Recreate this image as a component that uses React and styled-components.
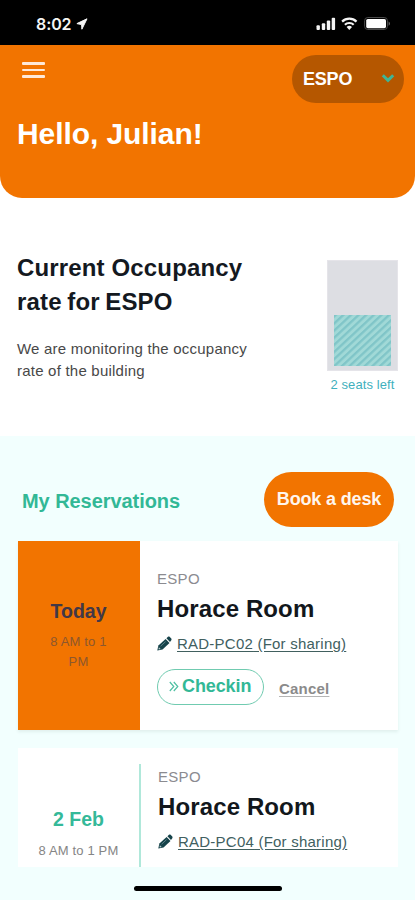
import styled, { createGlobalStyle } from 'styled-components';

const GlobalStyle = createGlobalStyle`
  * {
    box-sizing: border-box;
  }
  body {
    margin: 0;
    background: #ffffff;
    font-family: 'Liberation Sans', Arial, sans-serif;
  }
`;

const Container = styled.div`
  width: 415px;
  height: 900px;
  display: flex;
  flex-direction: column;
  overflow: hidden;
  position: relative;
  white-space: nowrap;
`;

const StatusBar = styled.div`
  height: 45px;
  flex: none;
  background: #000000;
  display: flex;
  justify-content: space-between;
  padding: 14px 25px 0 36px;
`;

const Clock = styled.div`
  display: flex;
  align-items: center;
  gap: 5px;
  height: 20px;
  color: #f4f4f4;
  font-family: Inter, sans-serif;
  font-weight: 600;
  font-size: 16px;
  letter-spacing: -0.1px;
`;

const StatusIcons = styled.div`
  display: flex;
  align-items: flex-start;
  padding-top: 2px;
`;

const Header = styled.div`
  height: 153px;
  flex: none;
  background: #f27400;
  border-radius: 0 0 22px 22px;
  padding: 10px 11px 0 17px;
`;

const HeaderTop = styled.div`
  display: flex;
  justify-content: space-between;
  align-items: flex-start;
  padding-left: 5px;
`;

const MenuButton = styled.div`
  width: 23px;
  display: flex;
  flex-direction: column;
  gap: 4px;
  padding-top: 7px;
`;

const MenuLine = styled.div`
  height: 2.5px;
  border-radius: 1px;
  background: #ffe9d8;
`;

const SiteSelect = styled.div`
  width: 112px;
  height: 48px;
  border-radius: 24px;
  background: #b55700;
  display: flex;
  align-items: center;
  justify-content: space-between;
  padding: 1px 9px 0 11px;
  color: #ffffff;
  font-size: 18px;
  font-weight: 700;
  letter-spacing: -0.2px;
`;

const Hello = styled.div`
  margin-top: 14px;
  color: #ffffff;
  font-size: 30px;
  font-weight: 700;
  line-height: 34px;
  letter-spacing: -0.08px;
`;

const Occupancy = styled.div`
  height: 238px;
  flex: none;
  display: flex;
  justify-content: space-between;
  padding: 53px 17px 0 17px;
`;

const OccupancyTitle = styled.div`
  color: #14191f;
  font-size: 24px;
  font-weight: 700;
  line-height: 34px;
  letter-spacing: 0.15px;
`;

const TitleLine = styled.div`
  word-spacing: ${({ $tight }) => ($tight ? '-1.2px' : '0')};
`;

const OccupancyText = styled.div`
  margin-top: 19px;
  color: #484848;
  font-size: 15px;
  line-height: 22px;
  letter-spacing: 0.22px;
`;

const Chart = styled.div`
  width: 71px;
  margin-top: 9px;
  display: flex;
  flex-direction: column;
  align-items: center;
`;

const ChartBar = styled.div`
  width: 71px;
  height: 111px;
  background: #dddee3;
  border: 1px solid #e5e4e9;
  display: flex;
  align-items: flex-end;
  padding: 0 6px 4px;
`;

const ChartLabel = styled.div`
  margin-top: 6px;
  color: #3fb0bd;
  font-size: 13px;
  line-height: 15px;
  letter-spacing: 0.1px;
`;

const Reservations = styled.div`
  flex: 1;
  min-height: 0;
  background: #f2fffe;
  padding: 36px 17px 0 18px;
`;

const ReservationsHead = styled.div`
  display: flex;
  justify-content: space-between;
  align-items: center;
  padding: 0 4px;
  margin-bottom: 14px;
`;

const ReservationsTitle = styled.div`
  padding-top: 4px;
  color: #32b896;
  font-size: 20px;
  font-weight: 700;
  letter-spacing: -0.06px;
`;

const BookButton = styled.div`
  width: 130px;
  height: 55px;
  border-radius: 28px;
  background: #f27400;
  color: #fff6ee;
  display: flex;
  align-items: center;
  justify-content: center;
  font-size: 18px;
  font-weight: 700;
  letter-spacing: -0.15px;
`;

const Card = styled.div`
  width: 380px;
  height: ${({ $height }) => $height}px;
  margin-bottom: 18px;
  padding-top: ${({ $active }) => ($active ? 0 : 16)}px;
  background: #ffffff;
  box-shadow: ${({ $active }) =>
    $active ? '0 2px 3px rgba(60, 90, 80, 0.09)' : 'none'};
  display: flex;
`;

const DateBox = styled.div`
  width: ${({ $active }) => ($active ? 122 : 123)}px;
  flex: none;
  padding: ${({ $active }) => ($active ? '59px 32px 0 31px' : '44px 0 0')};
  background: ${({ $active }) => ($active ? '#f27400' : '#ffffff')};
  border-right: ${({ $active }) => ($active ? 'none' : '2px solid #b0e8da')};
  text-align: center;
`;

const Day = styled.div`
  color: ${({ $active }) => ($active ? '#413847' : '#35b999')};
  font-size: 19.5px;
  font-weight: 700;
  line-height: 23px;
`;

const Time = styled.div`
  margin: ${({ $active }) => ($active ? '9px 0 0 -4px' : '10px 0 0')};
  padding-left: ${({ $active }) => ($active ? 4 : 0)}px;
  color: ${({ $active }) => ($active ? '#8d572d' : '#858585')};
  font-size: 13px;
  line-height: 20px;
  letter-spacing: 0.15px;
  white-space: ${({ $active }) => ($active ? 'normal' : 'nowrap')};
`;

const Info = styled.div`
  padding: ${({ $active }) => ($active ? '29px 0 0 17px' : '4px 0 0 17px')};
`;

const Site = styled.div`
  color: #8b8b90;
  font-size: 15px;
  line-height: 18px;
  letter-spacing: 0.3px;
`;

const Room = styled.div`
  margin-top: 6px;
  color: #12171c;
  font-size: 24px;
  font-weight: 700;
  line-height: 30px;
  letter-spacing: 0.12px;
`;

const Desk = styled.div`
  display: flex;
  align-items: center;
  gap: 4px;
  margin-top: 10px;
  color: #41605f;
  font-size: 15px;
  line-height: 20px;
  letter-spacing: 0.23px;
`;

const DeskName = styled.span`
  text-decoration: underline;
  text-underline-offset: 2px;
`;

const Actions = styled.div`
  display: flex;
  align-items: center;
  gap: 15px;
  margin-top: 15px;
`;

const CheckinButton = styled.div`
  width: 107px;
  height: 36px;
  border: 1px solid #70cbb0;
  border-radius: 18px;
  display: flex;
  align-items: center;
  gap: 3px;
  padding: 0 0 1px 11px;
  color: #32b896;
  font-size: 18px;
  font-weight: 700;
  letter-spacing: -0.1px;
`;

const CancelButton = styled.div`
  padding-top: 2px;
  color: #8b8b8b;
  font-size: 15px;
  font-weight: 700;
  letter-spacing: 0.2px;
  text-decoration: underline;
  text-decoration-color: #b5b5b5;
  text-underline-offset: 2px;
`;

const Footer = styled.div`
  height: 33px;
  flex: none;
  background: #f2fffe;
  display: flex;
  justify-content: center;
  padding: 19px 0 0 1px;
`;

const HomeBar = styled.div`
  width: 148px;
  height: 5px;
  border-radius: 3px;
  background: #000000;
`;

function LocationIcon() {
  return (
    <svg width="12" height="12" viewBox="0 0 12 12">
      <path
        d="M11 .8.9 5.6l4.7 1 .3 4.6z"
        fill="#f4f4f4"
        stroke="#f4f4f4"
        strokeWidth="1"
        strokeLinejoin="round"
      />
    </svg>
  );
}

function SignalIcons() {
  return (
    <svg width="75" height="16" viewBox="0 0 75 16" fill="#f4f4f4">
      <rect x="1.5" y="9.3" width="3.4" height="4.6" rx="1" />
      <rect x="6.8" y="7.3" width="3.4" height="6.6" rx="1" />
      <rect x="11.8" y="4.6" width="3.4" height="9.3" rx="1" />
      <rect x="16.7" y="1.8" width="3.4" height="12.1" rx="1" />
      <g fill="none" stroke="#f4f4f4" strokeWidth="2.2">
        <path d="M27.1 5.6a10.2 10.2 0 0 1 14.4 0" />
        <path d="M29.9 8.8a6.3 6.3 0 0 1 8.8 0" />
      </g>
      <path d="M34.3 13.9l-2.7-2.9a4 4 0 0 1 5.4 0z" />
      <rect
        x="49.6"
        y="1.5"
        width="22.8"
        height="12"
        rx="3.2"
        fill="none"
        stroke="#4a4a4a"
      />
      <rect x="51.2" y="3" width="19.8" height="9.2" rx="1.6" fill="#ffffff" />
      <path d="M73.6 5.4v4.4c1.8-.9 1.8-3.5 0-4.4z" fill="#6a6a6a" />
    </svg>
  );
}

function ChevronIcon() {
  return (
    <svg width="14" height="13" viewBox="0 0 14 13">
      <path
        d="M1.8 2.3 7 7.4l5.2-5.1"
        fill="none"
        stroke="#3fb594"
        strokeWidth="3"
      />
    </svg>
  );
}

function Hatch() {
  return (
    <svg width="57" height="51" viewBox="0 0 57 51">
      <defs>
        <pattern
          id="hatch"
          width="5.2"
          height="5.2"
          patternUnits="userSpaceOnUse"
          patternTransform="rotate(47)"
        >
          <rect width="5.2" height="5.2" fill="#a1d9d7" />
          <rect width="2.3" height="5.2" fill="#80c5c8" />
        </pattern>
      </defs>
      <rect width="57" height="51" fill="url(#hatch)" />
    </svg>
  );
}

function PencilIcon() {
  return (
    <svg width="16" height="16" viewBox="0 0 16 16" fill="#16434a">
      <path d="M8.6 2.9 1.4 9.4.3 14.6l5.2-1 7-6.6z" />
      <path d="M9.4 2.2 11 .8c.5-.4 1.1-.4 1.6 0l1.7 1.8c.4.5.4 1.1 0 1.6l-1.3 1.9z" />
      <path d="M3.6 10.2 8.6 5.6" stroke="#6d9196" strokeWidth="0.8" />
      <path d="M1.9 11.3l1.8 1.8-1.8.4-.4-.4z" fill="#b9cccd" />
    </svg>
  );
}

function DoubleArrowIcon() {
  return (
    <svg width="10" height="11" viewBox="0 0 10 11">
      <path
        d="M.8 1l4 4.5-4 4.5M4.8 1l4 4.5-4 4.5"
        fill="none"
        stroke="#4fc0a3"
        strokeWidth="1.2"
      />
    </svg>
  );
}

function ReservationCard({ day, time, desk, height, active }) {
  return (
    <Card $active={active} $height={height}>
      <DateBox $active={active}>
        <Day $active={active}>{day}</Day>
        <Time $active={active}>{time}</Time>
      </DateBox>
      <Info $active={active}>
        <Site>ESPO</Site>
        <Room>Horace Room</Room>
        <Desk>
          <PencilIcon />
          <DeskName>{desk} (For sharing)</DeskName>
        </Desk>
        {active && (
          <Actions>
            <CheckinButton>
              <DoubleArrowIcon />
              Checkin
            </CheckinButton>
            <CancelButton>Cancel</CancelButton>
          </Actions>
        )}
      </Info>
    </Card>
  );
}

function App() {
  return (
    <>
      <GlobalStyle />
      <Container>
        <StatusBar>
          <Clock>
            8:02
            <LocationIcon />
          </Clock>
          <StatusIcons>
            <SignalIcons />
          </StatusIcons>
        </StatusBar>
        <Header>
          <HeaderTop>
            <MenuButton>
              <MenuLine />
              <MenuLine />
              <MenuLine />
            </MenuButton>
            <SiteSelect>
              ESPO
              <ChevronIcon />
            </SiteSelect>
          </HeaderTop>
          <Hello>Hello, Julian!</Hello>
        </Header>
        <Occupancy>
          <div>
            <OccupancyTitle>
              <TitleLine>Current Occupancy</TitleLine>
              <TitleLine $tight>rate for ESPO</TitleLine>
            </OccupancyTitle>
            <OccupancyText>
              We are monitoring the occupancy
              <br />
              rate of the building
            </OccupancyText>
          </div>
          <Chart>
            <ChartBar>
              <Hatch />
            </ChartBar>
            <ChartLabel>2 seats left</ChartLabel>
          </Chart>
        </Occupancy>
        <Reservations>
          <ReservationsHead>
            <ReservationsTitle>My Reservations</ReservationsTitle>
            <BookButton>Book a desk</BookButton>
          </ReservationsHead>
          <ReservationCard
            day="Today"
            time="8 AM to 1 PM"
            desk="RAD-PC02"
            height={189}
            active
          />
          <ReservationCard
            day="2 Feb"
            time="8 AM to 1 PM"
            desk="RAD-PC04"
            height={119}
          />
        </Reservations>
        <Footer>
          <HomeBar />
        </Footer>
      </Container>
    </>
  );
}

export default App;
